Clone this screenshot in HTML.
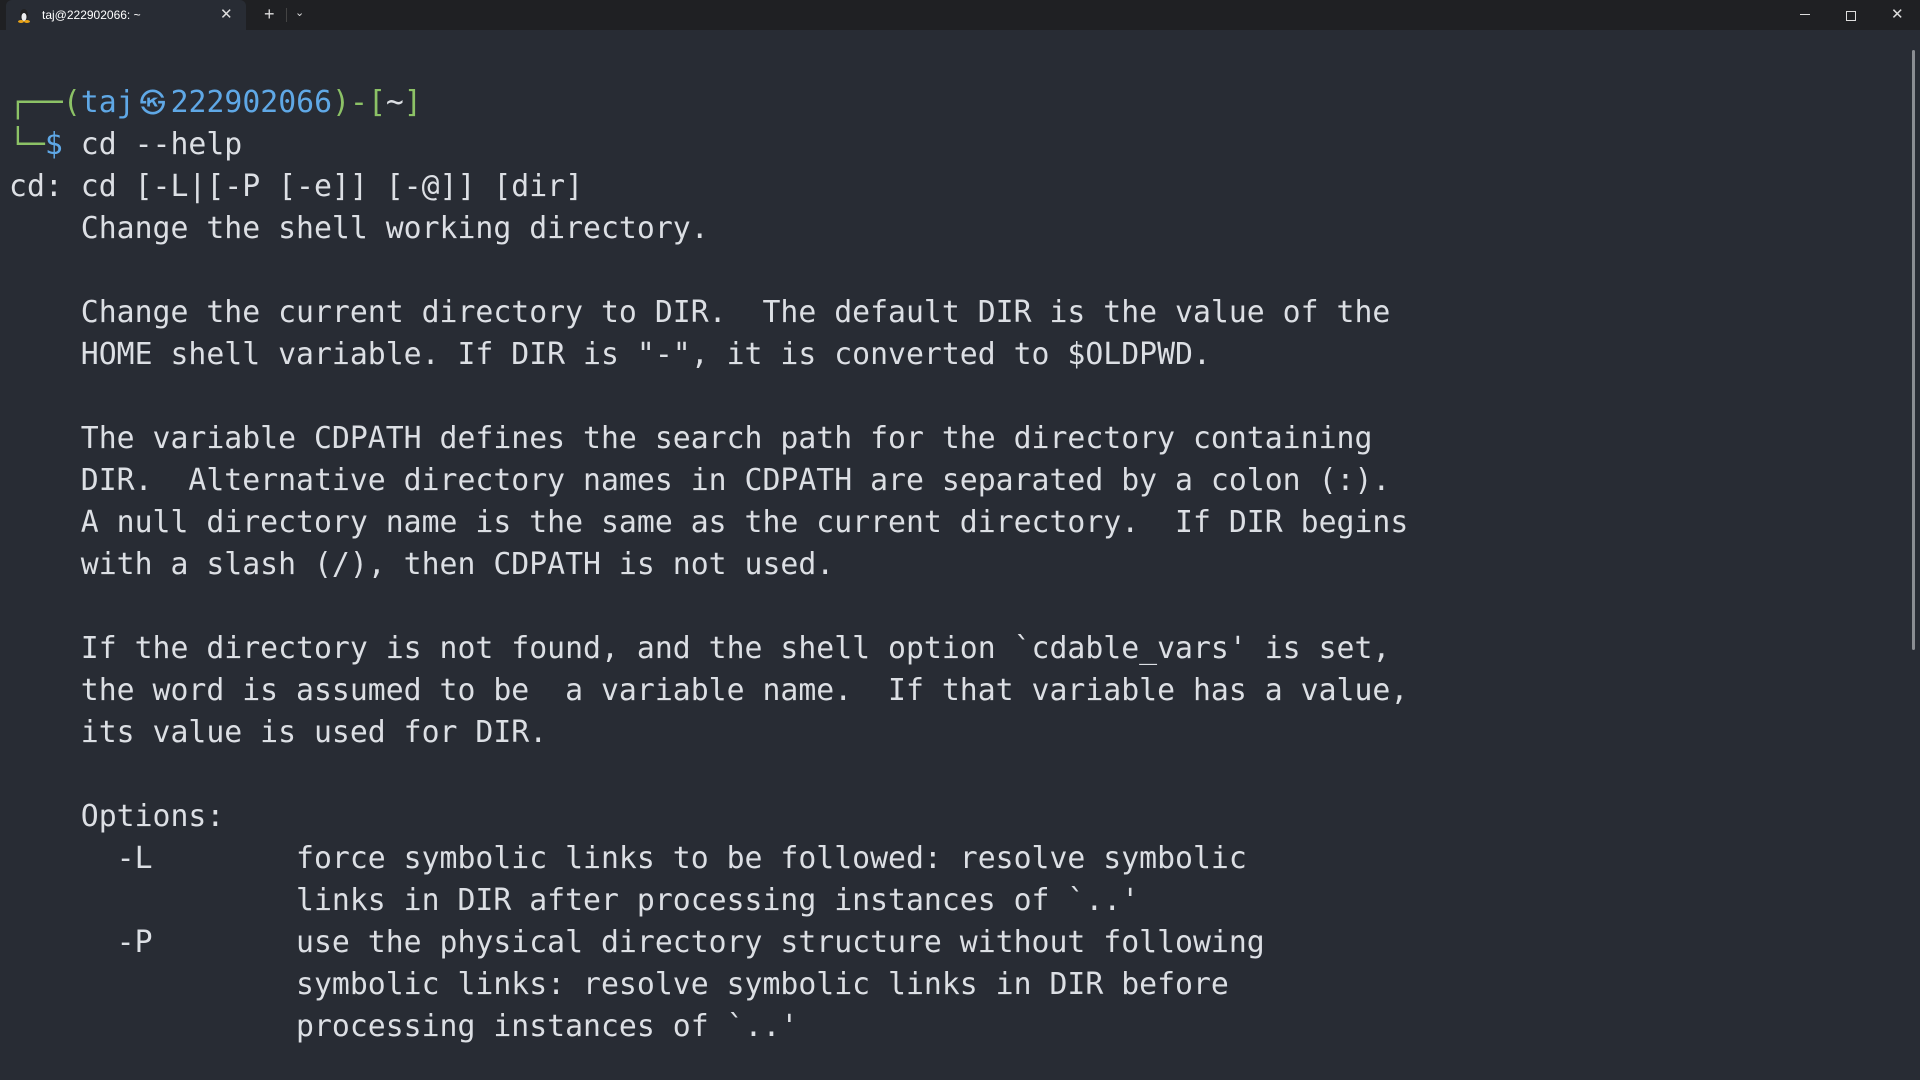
<!DOCTYPE html>
<html><head><meta charset="utf-8"><style>
html,body{margin:0;padding:0;width:1920px;height:1080px;overflow:hidden;background:#282c34;}
.bar{position:absolute;left:0;top:0;width:1920px;height:30px;background:#1f2023;}
.tab{position:absolute;left:6px;top:0;width:240px;height:30px;background:#282c34;border-radius:6px 6px 0 0;}
.tt{position:absolute;left:42px;top:8px;font:12px "Liberation Sans",sans-serif;color:#fff;}
.x{position:absolute;color:#ddd;font:16px "Liberation Sans",sans-serif;}
pre{position:absolute;left:9px;top:82px;margin:0;font-family:"DejaVu Sans Mono","Liberation Mono",monospace;font-size:29.8px;line-height:42px;color:#dcdfe4;}
.g{color:#8cc266}.b{color:#5fa8e6}
.k{display:inline-block;width:36px;text-align:center;font-family:"Noto Sans CJK KR",sans-serif;font-size:26px;line-height:30px;}
.sb{position:absolute;left:1912px;top:50px;width:3px;height:600px;background:#8a8d92;border-radius:2px;}
</style></head><body>
<div class="bar"></div>
<div class="tab"></div>
<svg style="position:absolute;left:18px;top:7px" width="12" height="16" viewBox="0 0 12 16"><ellipse cx="6" cy="8" rx="4" ry="6" fill="#222"/><ellipse cx="6" cy="10" rx="2.5" ry="4" fill="#eee"/><ellipse cx="3" cy="14.5" rx="3" ry="1.5" fill="#e8a317"/><ellipse cx="9" cy="14.5" rx="3" ry="1.5" fill="#e8a317"/></svg>
<div class="tt">taj@222902066: ~</div>
<div class="x" style="left:220px;top:5px;font-size:15px">✕</div>
<div class="x" style="left:264px;top:4px;font-size:18px">+</div>
<div style="position:absolute;left:286px;top:8px;width:1px;height:14px;background:#444"></div>
<div class="x" style="left:295px;top:6px;font-size:11px">⌄</div>
<div style="position:absolute;left:1800px;top:14px;width:10px;height:1px;background:#ddd"></div>
<div style="position:absolute;left:1846px;top:11px;width:8px;height:8px;border:1px solid #ddd"></div>
<div class="x" style="left:1891px;top:5px;font-size:15px">✕</div>
<pre><span class="g">┌──(</span><span class="b">taj<span class="k">㉿</span>222902066</span><span class="g">)-[</span>~<span class="g">]</span>
<span class="g">└─</span><span class="b">$</span> cd --help
cd: cd [-L|[-P [-e]] [-@]] [dir]
    Change the shell working directory.

    Change the current directory to DIR.  The default DIR is the value of the
    HOME shell variable. If DIR is "-", it is converted to $OLDPWD.

    The variable CDPATH defines the search path for the directory containing
    DIR.  Alternative directory names in CDPATH are separated by a colon (:).
    A null directory name is the same as the current directory.  If DIR begins
    with a slash (/), then CDPATH is not used.

    If the directory is not found, and the shell option `cdable_vars' is set,
    the word is assumed to be  a variable name.  If that variable has a value,
    its value is used for DIR.

    Options:
      -L        force symbolic links to be followed: resolve symbolic
                links in DIR after processing instances of `..'
      -P        use the physical directory structure without following
                symbolic links: resolve symbolic links in DIR before
                processing instances of `..'</pre>
<div class="sb"></div>
</body></html>
